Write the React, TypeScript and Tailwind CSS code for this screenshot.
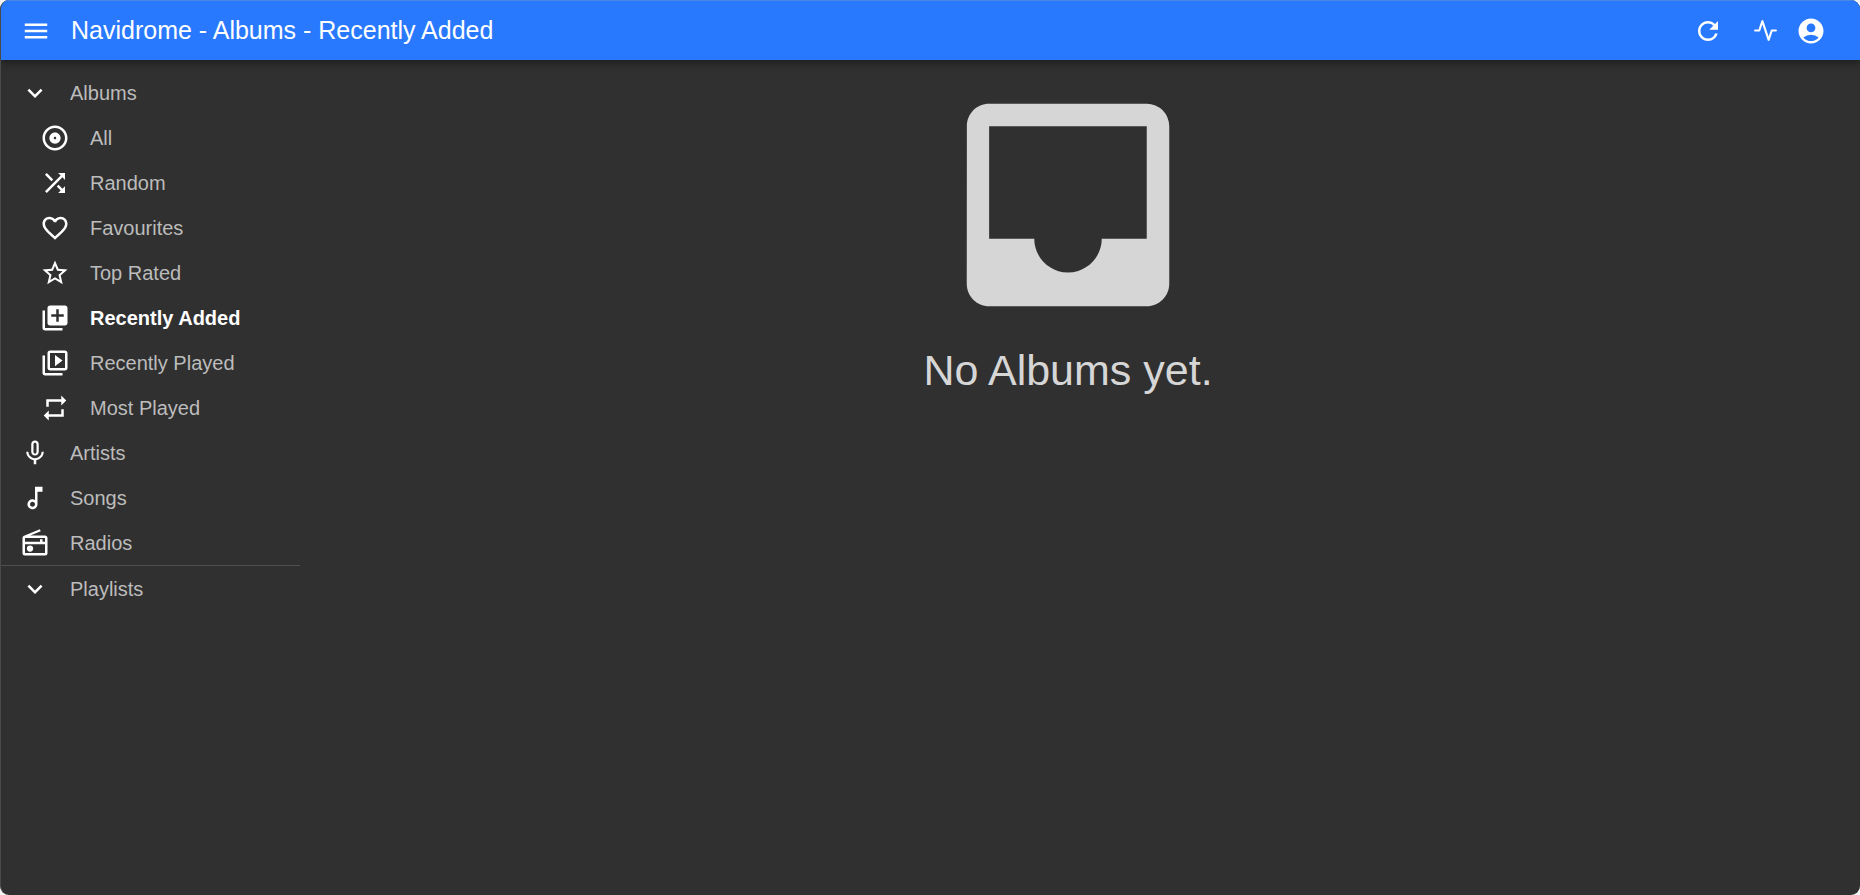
import type { IconType } from 'react-icons'
import { FiActivity } from 'react-icons/fi'
import {
  MdAccountCircle,
  MdExpandMore,
  MdFavoriteBorder,
  MdInbox,
  MdLibraryAdd,
  MdMenu,
  MdMicNone,
  MdOutlineAlbum,
  MdOutlineMusicNote,
  MdOutlineRadio,
  MdOutlineVideoLibrary,
  MdRefresh,
  MdRepeat,
  MdShuffle,
  MdStarBorder,
} from 'react-icons/md'

type Item = { label: string; icon: IconType; active?: boolean }

const albumViews: Item[] = [
  { label: 'All', icon: MdOutlineAlbum },
  { label: 'Random', icon: MdShuffle },
  { label: 'Favourites', icon: MdFavoriteBorder },
  { label: 'Top Rated', icon: MdStarBorder },
  { label: 'Recently Added', icon: MdLibraryAdd, active: true },
  { label: 'Recently Played', icon: MdOutlineVideoLibrary },
  { label: 'Most Played', icon: MdRepeat },
]

const resources: Item[] = [
  { label: 'Artists', icon: MdMicNone },
  { label: 'Songs', icon: MdOutlineMusicNote },
  { label: 'Radios', icon: MdOutlineRadio },
]

function SubMenuToggle({ label }: { label: string }) {
  return (
    <button type="button" aria-expanded="true" className="flex h-[45px] w-full items-center gap-5 pl-[19px] text-left">
      <MdExpandMore className="size-[30px] text-white" />
      {label}
    </button>
  )
}

function MenuLink({ item, nested }: { item: Item; nested?: boolean }) {
  const Icon = item.icon
  return (
    <li>
      <a
        href="#"
        aria-current={item.active ? 'page' : undefined}
        className={`flex h-[45px] items-center gap-5 ${nested ? 'pl-[39px]' : 'pl-[19px]'} ${item.active ? 'font-bold text-white' : ''}`}
      >
        <Icon className="size-[30px] text-white" />
        {item.label}
      </a>
    </li>
  )
}

function AppBar() {
  return (
    <header className="relative flex h-[60px] items-center border-t border-[#4a86e6] bg-[#2979ff] pl-5 pr-[34px] text-white shadow-[0_2px_5px_-1px_rgba(0,0,0,0.2),0_5px_6px_rgba(0,0,0,0.14),0_1px_12px_rgba(0,0,0,0.12)]">
      <button type="button" aria-label="Open menu">
        <MdMenu className="size-[30px]" />
      </button>
      <h1 className="ml-5 flex-1 text-[25px]">Navidrome - Albums - Recently Added</h1>
      <div className="flex items-center">
        <button type="button" aria-label="Refresh">
          <MdRefresh className="size-[30px]" />
        </button>
        <button type="button" aria-label="Activity" className="ml-[30px]">
          <FiActivity className="size-[25px]" />
        </button>
        <button type="button" aria-label="Profile" className="ml-[18px]">
          <MdAccountCircle className="size-[30px]" />
        </button>
      </div>
    </header>
  )
}

function Sidebar() {
  return (
    <nav className="w-[299px] shrink-0 pt-[10px] text-xl text-[#bcbcbc]">
      <SubMenuToggle label="Albums" />
      <ul>
        {albumViews.map((item) => (
          <MenuLink key={item.label} item={item} nested />
        ))}
      </ul>
      <ul>
        {resources.map((item) => (
          <MenuLink key={item.label} item={item} />
        ))}
      </ul>
      <hr className="border-[#4f4f4f]" />
      <SubMenuToggle label="Playlists" />
    </nav>
  )
}

export default function App() {
  return (
    <div className="flex min-h-screen bg-[#f3f3f3] font-['Liberation_Sans',Arial,sans-serif]">
      <div className="flex flex-1 flex-col overflow-hidden rounded-[9px] border-l border-[#4a4a4a] bg-[#303030]">
        <AppBar />
        <div className="flex flex-1">
          <Sidebar />
          <main className="flex flex-1 flex-col items-center pr-6 pt-[10px] text-[#d6d6d6]">
            <MdInbox className="size-[270px]" />
            <p className="text-[43px] leading-[60px]">No Albums yet.</p>
          </main>
        </div>
      </div>
    </div>
  )
}
